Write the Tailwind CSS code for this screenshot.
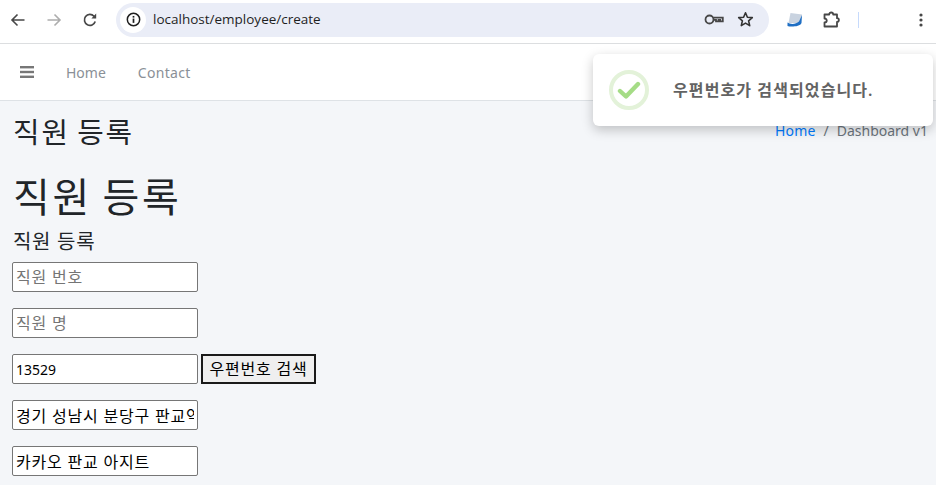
<!DOCTYPE html>
<html lang="ko">
<head>
    <meta charset="UTF-8">
    <title>직원 등록</title>
    <script src="https://cdn.jsdelivr.net/npm/@tailwindcss/browser@4"></script>
</head>
<body class="relative w-[936px] h-[485px] overflow-hidden bg-[#f4f6f9] font-['Noto_Sans','Noto_Sans_CJK_KR',sans-serif] text-[#212529]">

    <!-- browser toolbar -->
    <div class="h-[44px] pb-[4px] bg-white border-b border-[#dcdee0] flex items-center">
        <div class="flex items-center w-[116px] pl-[10px] gap-[20px] shrink-0">
            <svg class="w-[16px] h-[16px]" viewBox="0 0 16 16" fill="none" stroke="#474747" stroke-width="1.6"><path d="M14.5 8H2M7.5 2.5 2 8l5.5 5.5"/></svg>
            <svg class="w-[16px] h-[16px]" viewBox="0 0 16 16" fill="none" stroke="#adadad" stroke-width="1.6"><path d="M1.5 8H14M8.5 2.5 14 8l-5.5 5.5"/></svg>
            <svg class="w-[16px] h-[16px]" viewBox="0 0 16 16" fill="none" stroke="#474747" stroke-width="1.7"><path d="M13.2 9.5A5.5 5.5 0 1 1 12 4.2L13.5 5.6"/><path d="M14.2 1.5V6.4H9.4Z" fill="#474747" stroke="none"/></svg>
        </div>
        <div class="w-[653px] h-[34px] rounded-full bg-[#eaedf7] flex items-center pl-[4px] pr-[15px] shrink-0">
            <div class="w-[26px] h-[26px] rounded-full bg-white flex items-center justify-center">
                <svg class="w-[15px] h-[15px]" viewBox="0 0 16 16" fill="none"><circle cx="8" cy="8" r="6.6" stroke="#1f1f1f" stroke-width="1.6"/><rect x="7.1" y="7" width="1.8" height="4.6" fill="#1f1f1f"/><rect x="7.1" y="4.2" width="1.8" height="1.8" fill="#1f1f1f"/></svg>
            </div>
            <span class="ml-[7px] text-[13.5px] text-[#1f1f1f] font-['Open_Sans',sans-serif]">localhost/employee/create</span>
            <svg class="ml-auto w-[20px] h-[13px]" viewBox="0 0 20 13" fill="none" stroke="#474747" stroke-width="1.8"><circle cx="5.5" cy="6.5" r="4"/><path d="M9.5 4.7H18.8V8.3H16.2V6.8H14.5V8.3H12V6.8H9.5"/></svg>
            <svg class="ml-[13px] w-[17px] h-[17px]" viewBox="0 0 17 17" fill="none" stroke="#333" stroke-width="1.6" stroke-linejoin="round"><path d="M8.5 1.8 10.4 6.2 15.3 6.6 11.6 9.8 12.7 14.6 8.5 12.1 4.3 14.6 5.4 9.8 1.7 6.6 6.6 6.2Z"/></svg>
        </div>
        <svg class="ml-[18px] w-[16px] h-[16px] shrink-0" viewBox="0 0 16 16"><path d="M3.5 1 15 2.5 13 11H1.5Z" fill="#c9d3e0"/><path d="M0.5 10.5C3 12.5 9 12.5 12 9.5L15 3 14.5 11C13 15 3 15 0.5 14Z" fill="#1f6fc4"/></svg>
        <svg class="ml-[20px] w-[17px] h-[17px] shrink-0" viewBox="0 0 17 17" fill="none" stroke="#474747" stroke-width="1.8" stroke-linejoin="round"><path d="M1.5 3.5H6.2C6.2 0.8 10.2 0.8 10.2 3.5H14V7.2C16.5 7.2 16.5 11 14 11V15.5H1.5V11.5C4.5 11.5 4.5 7.5 1.5 7.5Z"/></svg>
        <div class="ml-[18px] w-[1px] h-[16px] bg-[#c6dafc] shrink-0"></div>
        <svg class="ml-[60px] w-[4px] h-[14px] shrink-0" viewBox="0 0 4 14" fill="#474747"><circle cx="2" cy="2" r="1.6"/><circle cx="2" cy="7" r="1.6"/><circle cx="2" cy="12" r="1.6"/></svg>
    </div>

    <!-- navbar -->
    <nav class="h-[57px] bg-white border-b border-[#dee2e6] flex items-center pl-[20px] text-[14px] text-[#8a9097]">
        <svg class="w-[14px] h-[12px]" viewBox="0 0 14 12" fill="#777"><rect width="14" height="2.4"/><rect y="4.8" width="14" height="2.4"/><rect y="9.6" width="14" height="2.4"/></svg>
        <a class="ml-[32px]">Home</a>
        <a class="ml-[32px] tracking-[0.3px]">Contact</a>
    </nav>

    <!-- content -->
    <main>
        <div class="flex items-center justify-between h-[60px] pl-[13px] pr-[8px]">
            <h1 class="text-[28.8px] leading-[1.2] mt-[3px] tracking-[1.9px] [word-spacing:-2px] text-[#212529]">직원 등록</h1>
            <div class="text-[14px] flex gap-[8px] mb-[1px]">
                <a class="text-[#007bff] tracking-[0.2px]">Home</a><span class="text-[#6c757d]">/</span><span class="text-[#6c757d]">Dashboard v1</span>
            </div>
        </div>
        <div class="pl-[13px]">
            <h1 class="text-[40px] leading-[48px] mt-[12px] tracking-[2.8px] [word-spacing:-3px]">직원 등록</h1>
            <h4 class="text-[20px] leading-[24px] mt-[9px] tracking-[0.7px]">직원 등록</h4>
            <form class="-ml-[1px] mt-[8px] flex flex-col gap-[16px] text-[16px] tracking-[0.8px] text-black">
                <input class="w-[186px] h-[30px] px-[3px] bg-white border border-[#767676] rounded-[2px] placeholder:text-[#757575]" placeholder="직원 번호">
                <input class="w-[186px] h-[30px] px-[3px] bg-white border border-[#767676] rounded-[2px] placeholder:text-[#757575]" placeholder="직원 명">
                <div class="flex gap-[3px]">
                    <input class="w-[186px] h-[30px] px-[3px] bg-white border border-[#767676] rounded-[2px] text-[14px] tracking-normal" value="13529">
                    <button type="button" class="w-[115px] h-[30px] bg-[#efefef] border-2 border-[#1a1a1a] text-[16px]">우편번호 검색</button>
                </div>
                <input class="w-[186px] h-[30px] px-[3px] bg-white border border-[#767676] rounded-[2px]" value="경기 성남시 분당구 판교역로 235">
                <input class="w-[186px] h-[30px] px-[3px] bg-white border border-[#767676] rounded-[2px]" value="카카오 판교 아지트">
            </form>
        </div>
    </main>

    <!-- toast -->
    <div class="absolute left-[593px] top-[54px] w-[340px] h-[72px] bg-white rounded-[6px] shadow-[0_4px_12px_rgba(0,0,0,0.22)] flex items-center pl-[16px]">
        <div class="w-[40px] h-[40px] rounded-full border-[4px] border-[#e3f2d9] flex items-center justify-center">
            <svg class="w-[24px] h-[20px]" viewBox="0 0 24 20" fill="none" stroke="#a5dc86" stroke-width="4.4" stroke-linecap="round" stroke-linejoin="round"><path d="M3 11 9 16.5 21 4"/></svg>
        </div>
        <span class="ml-[24px] text-[16px] font-semibold tracking-[1.1px] text-[#636363]">우편번호가 검색되었습니다.</span>
    </div>
</body>
</html>
